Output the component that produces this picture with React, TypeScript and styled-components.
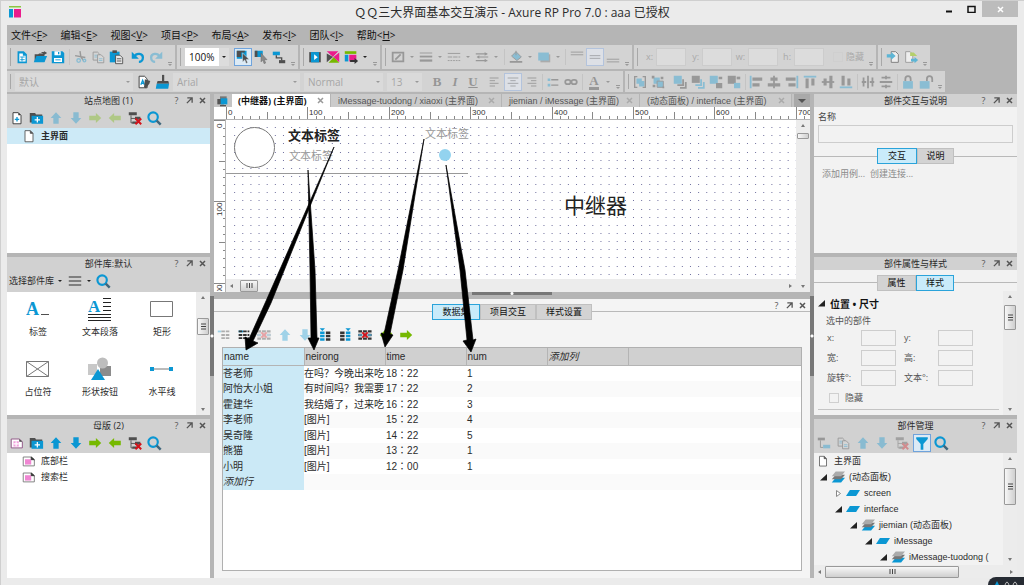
import React from "react";
import styled, { createGlobalStyle, css } from "styled-components";

const BLUE = "#0b97d3";
const DARK = "#4f4f4f";
const GREEN = "#76b900";
const PINK = "#ea1c8c";
const UI = `"Open Sans", "Noto Sans CJK SC", sans-serif`;
const DATA = `"Liberation Sans", "Noto Sans CJK SC", sans-serif`;

const Global = createGlobalStyle`
  * { box-sizing: border-box; }
  body { margin: 0; background: #ebebeb; color: #2b2b2b; font: 9px/14px ${UI}; }
  button, input, select { font: inherit; color: inherit; margin: 0; padding: 0; border: 0; border-radius: 0; background: none; }
  svg { display: block; flex: none; }
`;

/* ---------- window ---------- */
const Window = styled.div`
  position: relative;
  display: flex;
  flex-direction: column;
  height: 100vh;
  padding: 0 7px 7px 6px;
  overflow: hidden;
  background: #ebebeb;
  border-left: 1px solid #cfcfcf;
  border-top: 1px solid #cfcfcf;
`;
const TitleBar = styled.header`
  display: grid;
  grid-template-columns: 1fr auto 1fr;
  height: 24px;
  flex: none;
`;
const AppLogo = styled.div`
  padding: 5px 2px;
`;
const Title = styled.h1`
  margin: 0;
  font-size: 12px;
  line-height: 24px;
  font-weight: 400;
  white-space: nowrap;
`;
const WindowButtons = styled.div`
  display: flex;
  justify-content: flex-end;
  height: 16px;
  margin-right: -1px;
`;
const WindowButton = styled.button<{ $close?: boolean }>`
  display: grid;
  place-items: center;
  width: ${(p) => (p.$close ? 36 : 22)}px;
  && {
    background: ${(p) => (p.$close ? "#bcbcbc" : "none")};
  }
`;
const Body = styled.div`
  display: flex;
  flex-direction: column;
  flex: 1;
  min-height: 0;
  background: #b5b5b5;
`;
const MenuBar = styled.nav`
  display: flex;
  gap: 13px;
  height: 20px;
  padding-left: 4px;
  flex: none;
`;
const MenuItem = styled.button`
  && {
    font-size: 10px;
    line-height: 20px;
    color: #111;
  }
  white-space: nowrap;
`;

/* ---------- toolbars ---------- */
const ToolRow = styled.div<{ $h: number }>`
  display: flex;
  gap: 2px;
  height: ${(p) => p.$h}px;
  margin-bottom: 2px;
  flex: none;
`;
const ToolGroup = styled.div`
  display: flex;
  align-items: center;
  flex: none;
  background: #d3d3d3;
  padding-left: 6px;
  position: relative;
  &::before {
    content: "";
    position: absolute;
    left: 3px;
    top: 3px;
    bottom: 3px;
    width: 1px;
    background: #a8a8a8;
  }
`;
const Slot = styled.button<{ $on?: boolean; $off?: boolean }>`
  display: grid;
  place-items: center;
  width: 18px;
  height: 18px;
  flex: none;
  > * {
    opacity: ${(p) => (p.$off ? 0.36 : 1)};
  }
  ${(p) =>
    p.$on &&
    css`
      && {
        background: ${p.$off ? "#dde0e6" : "#dceaf5"};
      }
      box-shadow: inset 0 0 0 1px ${p.$off ? "#b3c3dc" : "#6fa3dc"};
    `}
`;
const Space = styled.span<{ $w: number; $line?: boolean }>`
  width: ${(p) => p.$w}px;
  height: 16px;
  flex: none;
  background: ${(p) => (p.$line ? "linear-gradient(#c4c4c4,#c4c4c4) center / 1px 100% no-repeat" : "none")};
`;
const Caret = styled.span<{ $off?: boolean }>`
  width: 10px;
  display: grid;
  place-items: center;
  flex: none;
  &::before {
    content: "";
    border: 2px solid transparent;
    border-top-color: ${(p) => (p.$off ? "#999" : "#222")};
    border-bottom: 0;
  }
`;
const Overflow = styled.span`
  width: 10px;
  height: 100%;
  display: flex;
  flex-direction: column;
  justify-content: flex-end;
  align-items: center;
  gap: 1px;
  padding-bottom: 3px;
  flex: none;
  &::before {
    content: "";
    width: 4px;
    height: 1px;
    background: #999;
  }
  &::after {
    content: "";
    border: 2px solid transparent;
    border-top-color: #999;
    border-bottom: 0;
  }
`;
const Combo = styled.label<{ $w: number; $live?: boolean }>`
  display: flex;
  align-items: center;
  width: ${(p) => p.$w}px;
  height: 18px;
  flex: none;
  margin: 0 2px;
  background: ${(p) => (p.$live ? "#fff" : "#dadada")};
  color: ${(p) => (p.$live ? "#111" : "#a6a6a6")};
  select {
    appearance: none;
    flex: 1;
    min-width: 0;
    padding-left: 4px;
    font-size: 10px;
    line-height: 18px;
    opacity: 1;
  }
  span {
    height: 100%;
    background: ${(p) => (p.$live ? "#dcdcdc" : "none")};
  }
`;
const MiniField = styled.label<{ $w: number }>`
  display: flex;
  align-items: center;
  justify-content: flex-end;
  gap: 3px;
  width: ${(p) => p.$w}px;
  flex: none;
  color: #a9a9a9;
  input[type="text"] {
    width: 30px;
    height: 18px;
    background: #dcdcdc;
    border: 1px solid #cccccc;
  }
`;
const Tick = styled.input`
  appearance: none;
  width: 10px;
  height: 10px;
  && {
    border: 1px solid #cfcfcf;
  }
`;

/* ---------- panes ---------- */
const Workspace = styled.main`
  display: grid;
  grid-template-columns: 203px 4px minmax(0, 1fr) 4px 203px;
  flex: 1;
  min-height: 0;
`;
const SideColumn = styled.div`
  display: grid;
  grid-template-rows: repeat(3, minmax(0, 1fr));
  gap: 4px;
  min-height: 0;
`;
const Splitter = styled.div<{ $row?: boolean }>`
  display: grid;
  place-items: center;
  &::before {
    content: "";
    width: ${(p) => (p.$row ? "80px" : "4px")};
    height: ${(p) => (p.$row ? "3px" : "80px")};
    background: radial-gradient(circle, #fff 1px, #777 2px);
  }
`;
const Panel = styled.section<{ $white?: boolean }>`
  display: flex;
  flex-direction: column;
  min-height: 0;
  overflow: hidden;
  background: ${(p) => (p.$white ? "#fff" : "#f2f2f2")};
`;
const PanelHead = styled.div`
  display: grid;
  grid-template-columns: 1fr auto 1fr;
  height: 13px;
  flex: none;
  background: #d1d1d1;
  h2 {
    margin: 0;
    font-size: 9px;
    line-height: 13px;
    font-weight: 400;
  }
`;
const HeadButtons = styled.div`
  grid-column: 3;
  display: flex;
  justify-content: flex-end;
  padding-right: 1px;
  button {
    display: grid;
    place-items: center;
    width: 13px;
    height: 13px;
    color: #555;
  }
`;
const PanelTools = styled.div<{ $n: number; $w: number; $clear?: boolean }>`
  height: 21px;
  flex: none;
  background: ${(p) => (p.$clear ? "none" : "#d1d1d1")};
  display: grid;
  grid-template-columns: repeat(${(p) => p.$n}, 1fr);
  place-items: center;
  padding-right: calc(100% - ${(p) => p.$w}px);
`;
const TreeRow = styled.div<{ $sel?: boolean; $indent: number }>`
  display: flex;
  align-items: center;
  gap: 4px;
  height: 16px;
  flex: none;
  padding-left: ${(p) => p.$indent}px;
  font-weight: ${(p) => (p.$sel ? 700 : 400)};
  background: ${(p) => (p.$sel ? "#cdeaf7" : "none")};
`;
const LibraryBar = styled.div`
  display: flex;
  align-items: center;
  height: 22px;
  padding-left: 2px;
  background: #d1d1d1;
  flex: none;
  label {
    display: flex;
    align-items: center;
  }
  select {
    appearance: none;
  }
`;
const Split = styled.div`
  display: flex;
  flex: 1;
  min-height: 0;
`;
const Library = styled.div`
  display: grid;
  grid-template-columns: repeat(3, 1fr);
  grid-auto-rows: 60px;
  flex: 1;
  padding: 5px 3px 0 0;
`;
const LibraryItem = styled.figure`
  margin: 0;
  display: flex;
  flex-direction: column;
  align-items: center;
  gap: 2px;
`;
const Bar = styled.div<{ $across?: boolean }>`
  display: flex;
  flex-direction: ${(p) => (p.$across ? "row" : "column")};
  align-items: center;
  justify-content: space-between;
  ${(p) => (p.$across ? "height: 13px; padding: 0 4px;" : "width: 14px; padding: 4px 0;")}
  flex: none;
  background: #ececec;
`;
const Thumb = styled.div<{ $across?: boolean; $size: number; $before: number }>`
  display: grid;
  place-items: center;
  flex: none;
  ${(p) =>
    p.$across
      ? `width:${p.$size}px;height:12px;margin-left:${p.$before}px;`
      : `height:${p.$size}px;width:12px;margin-top:${p.$before}px;`}
  border: 1px solid #999;
  border-radius: 1px;
  background: linear-gradient(${(p) => (p.$across ? "180deg" : "90deg")}, #f7f7f7, #cfcfcf);
`;
const Fill = styled.span`
  flex: 1;
`;
const Tip = styled.i<{ $d: "u" | "d" | "l" | "r" }>`
  flex: none;
  border: 3px solid transparent;
  ${(p) =>
    ({
      u: "border-bottom-color:#777;border-top:0;border-left-width:2px;border-right-width:2px;",
      d: "border-top-color:#777;border-bottom:0;border-left-width:2px;border-right-width:2px;",
      l: "border-right-color:#777;border-left:0;border-top-width:2px;border-bottom-width:2px;",
      r: "border-left-color:#777;border-right:0;border-top-width:2px;border-bottom-width:2px;",
    })[p.$d]}
`;
const MenuTip = styled.i`
  border: 4px solid transparent;
  border-top-color: #555;
  border-bottom: 0;
`;

/* ---------- segmented tabs ---------- */
const SegmentRow = styled.div<{ $top: number }>`
  display: flex;
  align-items: center;
  justify-content: center;
  margin-top: ${(p) => p.$top}px;
  flex: none;
  &::before,
  &::after {
    content: "";
    flex: 1;
    height: 1px;
    background: #b9b9b9;
  }
`;
const Segment = styled.button<{ $on?: boolean; $w: number }>`
  width: ${(p) => p.$w}px;
  height: 16px;
  && {
    line-height: 14px;
    color: #111;
    background: ${(p) => (p.$on ? "#c9ebfa" : "#d3d3d3")};
    border: 1px solid ${(p) => (p.$on ? "#2aa3da" : "#c0c0c0")};
  }
`;

/* ---------- centre ---------- */
const Center = styled.div`
  position: relative;
  display: flex;
  flex-direction: column;
  min-width: 0;
  min-height: 0;
`;
const Editor = styled.div`
  display: flex;
  flex-direction: column;
  height: 198px;
  flex: none;
  background: #fff;
`;
const TabStrip = styled.div`
  display: flex;
  height: 13px;
  flex: none;
  background: #c4c4c4;
`;
const PageIcon = styled.span`
  width: 18px;
  padding: 1px 2px;
  flex: none;
`;
const PageTab = styled.button<{ $on?: boolean; $w: number }>`
  display: flex;
  align-items: center;
  justify-content: space-between;
  width: ${(p) => p.$w}px;
  flex: none;
  white-space: nowrap;
  && {
    padding: 0 6px 0 ${(p) => (p.$on ? 6 : 7)}px;
    font-family: ${(p) => (p.$on ? UI : DATA)};
    font-weight: ${(p) => (p.$on ? 700 : 400)};
    color: ${(p) => (p.$on ? "#111" : "#555")};
    background: ${(p) => (p.$on ? "#fff" : "#cbcbcb")};
    border-right: 1px solid #b5b5b5;
  }
`;
const TabMenu = styled.button`
  display: grid;
  place-items: center;
  width: 16px;
  margin-left: auto;
  && {
    background: #a9a9a9;
  }
`;
const RulerTop = styled.div`
  height: 13px;
  flex: none;
  overflow: hidden;
  padding-left: 12px;
  border-bottom: 1px solid #b4b4b4;
`;
const RulerSide = styled.div`
  width: 12px;
  flex: none;
  overflow: hidden;
  border-right: 1px solid #b4b4b4;
`;
const CanvasColumn = styled.div`
  display: flex;
  flex-direction: column;
  flex: 1;
  min-width: 0;
`;
const Canvas = styled.div`
  position: relative;
  flex: 1;
  overflow: hidden;
`;
const Shape = styled.span<{ $x: number; $y: number; $size: number; $tone: string; $bold?: boolean }>`
  position: absolute;
  left: ${(p) => p.$x}px;
  top: ${(p) => p.$y}px;
  font-size: ${(p) => p.$size}px;
  line-height: ${(p) => p.$size + 4}px;
  color: ${(p) => p.$tone};
  font-weight: ${(p) => (p.$bold ? 700 : 400)};
  white-space: nowrap;
`;
const Repeater = styled.section`
  display: flex;
  flex-direction: column;
  flex: 1;
  min-height: 0;
  margin-top: 4px;
  background: #f4f4f4;
`;
const RepeaterHead = styled.div`
  display: grid;
  grid-template-columns: 1fr;
  height: 25px;
  flex: none;
  > * {
    grid-area: 1 / 1;
  }
`;
const HeadCorner = styled.div`
  display: flex;
  height: 13px;
  justify-content: flex-end;
`;
const TableBox = styled.div`
  flex: 1;
  min-height: 0;
  margin: 2px 8px 7px;
  background: #fff;
  border: 1px solid #b0b0b0;
`;
const DataTable = styled.table`
  width: 100%;
  table-layout: fixed;
  border-collapse: collapse;
  font: 10px/15px ${DATA};
  th {
    height: 17px;
    padding: 0 2px 0 1px;
    text-align: left;
    font-weight: 400;
    background: #d0d0d0;
    border-right: 1px solid #b4b4b4;
    border-bottom: 1px solid #b4b4b4;
  }
  th:last-child {
    border-right: 0;
  }
  td {
    height: 15px;
    padding: 0;
    white-space: nowrap;
  }
  tr:nth-child(even) td {
    height: 16px;
    background: #fafafa;
  }
  thead th:first-child,
  tbody tr td:first-child {
    background: #cbe9f6;
  }
  td:nth-child(3) {
    padding-left: 1px;
    font-family: "Liberation Sans", "Noto Sans CJK TC", sans-serif;
  }
  td:nth-child(4) {
    padding-left: 1px;
  }
`;
const Pointers = styled.svg`
  position: absolute;
  left: 0;
  top: 0;
  pointer-events: none;
`;

/* ---------- inspector ---------- */
const NameField = styled.label`
  display: block;
  padding: 3px 4px 0;
  color: #444;
  input {
    display: block;
    width: 100%;
    height: 18px;
    margin-top: 1px;
    border: 1px solid #cdcdcd;
  }
`;
const LinkRow = styled.div`
  display: flex;
  gap: 5px;
  padding: 3px 8px;
  a {
    color: #8a8a8a;
    text-decoration: none;
  }
`;
const Form = styled.div`
  flex: 1;
  padding: 4px 4px 0;
  color: #555;
  h3 {
    display: flex;
    align-items: center;
    gap: 5px;
    margin: 0;
    font-size: 10px;
    line-height: 18px;
    color: #111;
  }
  p {
    margin: 0 0 1px 8px;
    line-height: 16px;
  }
`;
const FieldGrid = styled.div`
  display: grid;
  grid-template-columns: 69px 69px;
  column-gap: 8px;
  row-gap: 4px;
  padding-left: 9px;
  label {
    display: flex;
    justify-content: space-between;
    align-items: center;
  }
  input {
    width: 35px;
    height: 16px;
    border: 1px solid #cdcdcd;
  }
`;
const HideRow = styled.label`
  display: flex;
  align-items: center;
  gap: 6px;
  padding: 6px 11px 5px;
  border-bottom: 1px solid #c4c4c4;
  line-height: 12px;
`;
const Outline = styled.div`
  display: flex;
  flex-direction: column;
  flex: 1;
  min-width: 0;
  overflow: hidden;
  font-family: ${DATA};
`;
const OutlineRow = styled.div<{ $level: number }>`
  display: flex;
  align-items: center;
  gap: 4px;
  flex: 1;
  white-space: nowrap;
  padding-left: ${(p) => 2 + Math.max(0, p.$level * 15 - 11)}px;
`;
const Toast = styled.div`
  position: absolute;
  right: 0;
  bottom: 0;
  width: 36px;
  height: 8px;
  background: #262b33;
  border-radius: 14px 0 0 0;
`;

/* ---------- icons ---------- */
type Art = React.ReactNode;
const Ico = ({ children, s = 18 }: { children: Art; s?: number }) => (
  <svg width={s} height={s} viewBox="0 0 18 18" fill="none" aria-hidden="true">
    {children}
  </svg>
);
const page = "M4.5 3h6l3 3v9.500h-9z";
const lines = (x1: number, x2: number, ys: number[], c = DARK, w = 1) =>
  ys.map((y) => <path key={y} d={`M${x1} ${y}H${x2}`} stroke={c} strokeWidth={w} />);

const art: Record<string, Art> = {
  newDoc: (<><path d="M4 2.500h7l3.500 3.500v10h-10.500z" fill={BLUE} /><path d="M6 5h4v2.500h3v6.500h-7z" fill="#fff" /><path d="M7 9h5M7 12h5M9 9v5" stroke={BLUE} /></>),
  open: (<><path d="M3 6h4l1-1h6v9H3z" fill={DARK} /><path d="M5 8h12l-3 7H2z" fill={BLUE} /><path d="M10 3.500h4l-1-1.500 4 2.500-3 2z" fill={DARK} /></>),
  save: (<><path d="M2 2.500h12l2 2v11.500H2z" fill={BLUE} /><path d="M5 2.500h7v4.500H5zM4.500 10h9v4.500h-9z" fill="#fff" /><path d="M9 3.500h1.500v2.500H9z" fill={BLUE} /><path d="M6 12.200h6" stroke={BLUE} /></>),
  cut: (<><path d="M9 2.500 10 9l3 4M3.500 7.500 15 9.500" stroke="#333" strokeWidth="1.600" /><circle cx="7.500" cy="13" r="2" stroke="#0b97d3" strokeWidth="1.500" /><circle cx="14" cy="13" r="1.500" stroke="#0b97d3" strokeWidth="1.500" /></>),
  copy: (<><path d="M3.500 3.500h5l2 2v7h-7z" stroke="#333" /><path d="M8.500 6.500h4l3 3v6h-7z" fill="#ddd" stroke="#333" /><path d="M10 11h4M10 13h4M5 7h3M5 9h3" stroke={BLUE} /></>),
  paste: (<><path d="M2 3h11v12H2z" fill={BLUE} /><path d="M5 1.500h5v3H5z" fill={DARK} /><path d="M8.500 7h5l3 3v6.500h-8z" fill="#e8e8e8" stroke={DARK} /><path d="M10 11h5M10 13.500h5" stroke={DARK} /></>),
  undo: (<><path d="M5 8.500C7 4 14.500 4.500 14.500 9.500c0 3-2 5-4.500 5" stroke={BLUE} strokeWidth="2.600" /><path d="M2 3v8h8z" fill={BLUE} /></>),
  redo: (<><path d="M13 8.500C11 4 3.500 4.500 3.500 9.500c0 3 2 5 4.500 5" stroke={BLUE} strokeWidth="2.600" /><path d="M16 3v8H8z" fill={BLUE} /></>),
  pick: (<><path d="M2 2h11v9H2z" fill={BLUE} /><path d="M2 2h5v7H2zM7 2h4v2H7z" fill={DARK} /><path d="M8.500 4.500v10l2.500-2.200 1.500 4 1.800-.8-1.600-3.700h3.300z" fill={DARK} stroke="#dceaf5" strokeWidth=".6" /></>),
  pick2: (<><path d="M2 2h9v7H2z" fill={BLUE} /><path d="M2 2h3v7H2z" fill={DARK} /><path d="M9 4.500v10l2-2 1.500 4 1.800-.8-1.500-3.700h3z" fill="#8a8a8a" stroke="#666" strokeWidth=".5" /></>),
  connector: (<><path d="M2 3h8v4H2z" fill={BLUE} /><path d="M6 7v3h6v3" stroke={DARK} strokeWidth="1.500" /><path d="M9 12.500h7v3.500H9z" fill={DARK} /></>),
  play: (<><path d="M2.500 3.500h13V15h-13z" fill={DARK} /><path d="M4.500 3.500h9V15h-9z" fill={BLUE} /><path d="m8 6 4 3.200-4 3.300z" fill="#fff" /></>),
  share: (<><path d="M2 2.500h13L9 9z" fill={PINK} /><path d="M9 9l6-6v5z" fill="#d3d3d3" /><path d="M2 5 9 9l-7 6z" fill={DARK} /><path d="M4 15.500 10 9l6 6.500z" fill={GREEN} /><path d="M16 4v11L9.500 9z" fill={PINK} /></>),
  publish: (<><path d="M2 2.500h13v3H2z" fill={GREEN} /><path d="M2 6.500h4V14H2z" fill={BLUE} /><path d="M7 6.500h8V14H7z" fill={PINK} /><path d="M8 12.500h5V10l4 3.500-4 3.500v-2.500H8z" fill="#333" /></>),
  fillBox: (<><path d="M3 4h12v10H3z" stroke="#333" strokeWidth="2" /><path d="m6 12 6-6" stroke="#333" strokeWidth="2" /></>),
  weight: (<>{lines(2, 16, [4.500], "#333")}{lines(2, 16, [8.500], "#333", 2)}{lines(2, 16, [13], "#333", 2.5)}</>),
  dashes: (<>{lines(2, 16, [5], "#333")}<path d="M2 9h14" stroke="#333" strokeDasharray="5 1" /><path d="M2 13h14" stroke="#333" strokeDasharray="2 1" /></>),
  ends: (<><path d="M2 5.500h13M4 9h12M2 13h13" stroke="#333" strokeWidth="1.300" /><path d="m12 3.500 3 2-3 2zM6 7 3 9l3 2zM12 11l3 2-3 2z" fill="#333" /></>),
  bucket: (<><path d="m9 3 6 6-5 4-6-5z" fill={BLUE} stroke="#333" /><path d="M2 14.500h14" stroke="#333" strokeWidth="2" /><path d="M9 2v5" stroke="#333" /></>),
  shadow: (<><path d="M5 6h11v9H5z" fill="#666" /><path d="M2.500 4h12v9h-12z" fill={BLUE} /></>),
  vTop: lines(2, 16, [3.5, 6.5], "#333"),
  vMid: lines(3, 15, [7.5, 10.5], "#333"),
  vBot: lines(2, 16, [11.500, 14.500], "#333"),
  styleEdit: (<><path d="M3.500 2.500h6l3 3v10h-9z" fill="#fff" stroke="#333" /><path d="m5.500 12 2-5 2 5M6 10.500h3" stroke={BLUE} strokeWidth="1.500" /><path d="m10 6 6 2-1 3-4 5-2-1z" fill={DARK} /></>),
  brush: (<><path d="M9 1h2.500v7H9z" fill={DARK} /><path d="M4 8h12l1 3H3z" fill={DARK} /><path d="M3 11h14l-1 5.500H2z" fill={BLUE} /></>),
  alignL: (<>{lines(3, 13, [4.500, 10.500], "#333")}{lines(3, 9, [7.500, 13.500], "#333")}</>),
  alignC: (<>{lines(3, 15, [4.500, 10.500], "#333")}{lines(6, 12, [7.500, 13.500], "#333")}</>),
  alignR: (<>{lines(5, 15, [4.500, 10.500], "#333")}{lines(9, 15, [7.500, 13.500], "#333")}</>),
  bullets: (<><path d="M3 5h3v3H3zM3 11h3v3H3z" fill={BLUE} /><path d="M7 6.500h8M7 12.500h8" stroke="#333" strokeWidth="1.500" /></>),
  link: (<><rect x="2.500" y="6.500" width="6" height="5" rx="2.500" stroke="#333" strokeWidth="2" /><rect x="9.500" y="6.500" width="6" height="5" rx="2.500" stroke="#333" strokeWidth="2" /></>),
  group: (<><path d="M5 5h6v6H5zM8 8h6v6H8z" fill={BLUE} /><path d="M3 6V3h3M12 3h3v3M15 12v3h-3M6 15H3v-3M3 6v6M15 6v6" stroke="#333" strokeWidth="1.500" /></>),
  ungroup: (<><path d="M4 4h7v7H4z" fill={BLUE} /><path d="M8 8h7v7H8z" fill={BLUE} stroke="#333" /><path d="M2 2h3v3H2zM12 3h3v3h-3zM3 12h3v3H3zM14 14h2v2h-2z" fill="#333" /></>),
  pages: (<><path d="M6 2h10v8H6z" fill="#777" /><path d="M2 6h10v8H2z" fill="#555" /><path d="M7 5h10v9H7z" fill={BLUE} /><path d="M6 16h9" stroke="#555" strokeWidth="2" /></>),
  front: (<><path d="M2 2h9v9H2z" fill={BLUE} /><path d="M12.500 6v6.500H6M15.500 9v6.500H9" stroke="#333" strokeWidth="2" /></>),
  back: (<><path d="M2 2h9v8H2z" fill="#333" /><path d="M12.500 6v6.500H6M15.500 9v6.500H9" stroke={BLUE} strokeWidth="2" /></>),
  forward: (<><path d="M2 2h9v9H2z" fill={BLUE} /><path d="M9 10h7v6H9zM12 3h4v3h-4z" fill="#333" /></>),
  backward: (<><path d="M2 2h9v9H2z" fill="#333" /><path d="M9 10h7v6H9z" fill={BLUE} /><path d="M12 3h4v3h-4z" fill="#333" /></>),
  aL: (<><path d="M3 2v14" stroke={BLUE} strokeWidth="2" /><path d="M5 4h11v3.500H5zM5 10.500h8V14H5z" fill="#333" /></>),
  aC: (<><path d="M9 2v14" stroke="#333" strokeWidth="2" /><path d="M5 4h8v3.500H5zM2 10.500h14V14H2z" fill="#333" /></>),
  aR: (<><path d="M15 2v14" stroke={BLUE} strokeWidth="2" /><path d="M2 4h11v3.500H2zM5 10.500h8V14H5z" fill="#333" /></>),
  aT: (<><path d="M2 3h14" stroke={BLUE} strokeWidth="2" /><path d="M4 5h3.500v11H4zM10.500 5H14v8h-3.500z" fill="#333" /></>),
  aM: (<><path d="M2 9h14" stroke="#333" strokeWidth="2" /><path d="M4 5h3.500v8H4zM10.500 2H14v14h-3.500z" fill="#333" /></>),
  aB: (<><path d="M2 15h14" stroke={BLUE} strokeWidth="2" /><path d="M4 2h3.500v11H4zM10.500 5H14v8h-3.500z" fill="#333" /></>),
  dH: (<><path d="M4 4v10M9 2v14M14 4v10M2 9h5M11 9h5" stroke="#333" strokeWidth="2" /></>),
  dV: (<><path d="M4 4h10M2 9h14M4 14h10M9 2v4M9 12v4" stroke="#333" strokeWidth="2" /></>),
  lock: (<><path d="M3.500 8h11v8.500h-11z" fill={BLUE} /><path d="M6 8V5.500a3 3 0 0 1 6 0V8" stroke="#333" strokeWidth="2" /></>),
  unlock: (<><path d="M2 8h11v8.500H2z" fill={BLUE} /><path d="M10 8V5.500a3 3 0 0 1 6 0V9" stroke="#333" strokeWidth="2" /></>),
  checkIn: (<><path d="M7 3h5l3 3v9H7z" stroke="#777" fill="#eee" /><path d="M2 6h5V3.500L12 8l-5 4V9.500H2z" fill="#5db5d5" /></>),
  checkOut: (<><path d="M3 3h5l3 3v9H3z" stroke="#999" fill="#eee" /><path d="M8 4h4l4 4H8z" fill="#b4cf6a" /><path d="M9 11h4V9l4 3.500-4 3.500v-2H9z" fill="#5db5d5" /></>),
  pageAdd: (<><path d={page} fill="#fff" stroke="#333" /><path d="M10.500 3v3h3z" fill="#333" /><path d="M9 8v5M6.500 10.500h5" stroke={BLUE} strokeWidth="1.500" /></>),
  page: (<><path d={page} fill="#fff" stroke="#555" /><path d="M10.500 3v3h3" fill="#555" stroke="#555" /></>),
  folderAdd: (<><path d="M2 3.500h6l1 1.500h7V14H2z" fill={DARK} /><path d="M4 6.500h13V15.500H4z" fill={BLUE} /><path d="M10.500 8v6M7.500 11h6" stroke="#fff" strokeWidth="1.400" /></>),
  up: <path d="M9 2.500 15 9h-3v6.500H6V9H3z" fill={BLUE} />,
  down: <path d="M9 15.500 3 9h3V2.500h6V9h3z" fill={BLUE} />,
  right: <path d="M16 9 10 3.500v3H2.500v5H10v3z" fill={GREEN} />,
  left: <path d="M2 9 8 3.500v3h7.500v5H8v3z" fill={GREEN} />,
  remove: (<><path d="M2 2.500h9v3.500H2zM9 7.500h6V11H9zM6 13h6v2.500H6z" fill={DARK} /><path d="M4.500 6v8.500H7M4.500 9.500H9" stroke={DARK} /><path d="m9.500 9.500 6.500 6.500m0-6.500-6.500 6.500" stroke="#d3131b" strokeWidth="2.200" /></>),
  search: (<><circle cx="8" cy="8" r="5.300" stroke={BLUE} strokeWidth="2.400" /><path d="m12 12 4.500 4.500" stroke="#40677c" strokeWidth="2.800" /></>),
  masterAdd: (<><path d="M2.500 4.500h9l3.500 3v7H2.500z" fill="#fff" stroke="#8a4c7e" /><path d="M5 7h6v6H5z" fill="#f3a0dc" /><path d="M8 7v6M5 10h6" stroke="#fff" strokeWidth="1.300" /><path d="M11.500 4.500v3H15z" fill="#444" /></>),
  master: (<><path d="M2.500 4.500h9l3.500 3v7H2.500z" fill="#fff" stroke="#777" /><path d="M4.500 7h7v6h-7z" fill="#ef86d2" /><path d="M11.500 4.500v3H15z" fill="#333" stroke="#333" /></>),
  burger: lines(2, 16, [4.500, 9, 13.500], "#555", 1.5),
  tableRowAdd: (<><path d="M2 4h4v2H2z" fill={BLUE} /><path d="M6 5h4M11 5h4M6 9h4M11 9h4M6 12.500h4M11 12.500h4" stroke="#333" strokeWidth="2" /></>),
  tableRow: (<><path d="M3 4h5v2H3z" fill={BLUE} /><path d="M3 5h12M3 9h12M3 12.500h12" stroke="#333" strokeWidth="2" strokeDasharray="4 1" /></>),
  tableDel: (<><path d="M1.500 5h15M1.500 9h15M1.500 13h15" stroke="#333" strokeWidth="2.600" strokeDasharray="4.300 1" /><path d="M1.500 9h15" stroke="#4f8fb0" strokeWidth="2" strokeDasharray="4.300 1" /><path d="m6 6 6 6m0-6-6 6" stroke="#d3131b" strokeWidth="2.200" /></>),
  colL: (<><path d="M3 1.500h6l-3 3z" fill={BLUE} /><path d="M6 5v11" stroke={BLUE} strokeWidth="5" strokeDasharray="2.800 1" /><path d="M12.500 5v11" stroke="#333" strokeWidth="5" strokeDasharray="2.800 1" /></>),
  colR: (<><path d="M9.500 1.500h6l-3 3z" fill={BLUE} /><path d="M6 5v11" stroke="#333" strokeWidth="5" strokeDasharray="2.800 1" /><path d="M12.500 5v11" stroke={BLUE} strokeWidth="5" strokeDasharray="2.800 1" /></>),
  treeAdd: (<><path d="M2 3h8v3H2z" fill="#333" /><path d="M5 6v8h3" stroke="#333" /><path d="M8 11h8v4H8z" fill={BLUE} /></>),
  funnel: <path d="M2.500 2.500h13v2L10.500 10v6.500h-3V10l-5-5.500z" fill={BLUE} />,
  stack: (<><path d="M6 10h12l-5 6H1z" fill={BLUE} /><path d="M6 6h12l-5 6H1z" fill="#777" /><path d="M6 2h12l-5 6H1z" fill="#ababab" /></>),
  state: <path d="M5 5h13l-5 8H0z" fill={BLUE} />,
};
const Letter = styled.b<{ $kind: "b" | "i" | "u" | "a" }>`
  font: ${(p) => (p.$kind === "i" ? "italic" : "normal")} 700 13px/13px "Liberation Serif", serif;
  text-decoration: ${(p) => (p.$kind === "u" ? "underline" : "none")};
  border-bottom: ${(p) => (p.$kind === "a" ? "3px solid #333" : "0")};
`;

const Tool = ({ n, label, on, off }: { n: string; label?: string; on?: boolean; off?: boolean }) => (
  <Slot $on={on} $off={off} disabled={off} aria-label={label ?? n}>
    <Ico s={16}>{art[n]}</Ico>
  </Slot>
);
const Tools = ({ list, off }: { list: string[]; off?: boolean }) => (
  <>{list.map((n) => <Tool key={n} n={n} off={off} />)}</>
);
const CloseMark = ({ c = "#555", s = 7 }: { c?: string; s?: number }) => (
  <svg width={s} height={s} viewBox="0 0 7 7" aria-hidden="true">
    <path d="m1 1 5 5m0-5-5 5" stroke={c} strokeWidth="1.500" />
  </svg>
);
const Corner = () => (
  <HeadButtons>
    <button aria-label="帮助">?</button>
    <button aria-label="浮动">
      <svg width="7" height="7" viewBox="0 0 8 8" aria-hidden="true">
        <path d="M1.500 1h5.500v5.500M6.500 1.500 1 7" stroke="#555" strokeWidth="1.500" fill="none" />
      </svg>
    </button>
    <button aria-label="关闭"><CloseMark /></button>
  </HeadButtons>
);
const Head = ({ children }: { children: string }) => (
  <PanelHead>
    <span />
    <h2>{children}</h2>
    <Corner />
  </PanelHead>
);
const Scroll = ({ before, size, across }: { before: number; size: number; across?: boolean }) => (
  <Bar $across={across}>
    <Tip $d={across ? "l" : "u"} />
    <Thumb $across={across} $size={size} $before={before}>
      {size > 10 && (
        <svg width="7" height="7" viewBox="0 0 7 7" aria-hidden="true">
          <path d={across ? "M1 1v5M3.500 1v5M6 1v5" : "M1 1h5M1 3.500h5M1 6h5"} stroke="#444" />
        </svg>
      )}
    </Thumb>
    <Fill />
    <Tip $d={across ? "r" : "d"} />
  </Bar>
);

/* ---------- library drawings ---------- */
const libraryItems: { name: string; art: Art }[] = [
  { name: "标签", art: (<><text x="0" y="18" fontSize="18" fontWeight="700" fontFamily="Liberation Serif, serif" fill={BLUE}>A</text><path d="M15 17.500h8" stroke={DARK} /></>) },
  { name: "文本段落", art: (<><text x="0" y="15" fontSize="17" fontWeight="700" fontFamily="Liberation Serif, serif" fill={BLUE}>A</text>{lines(15, 23, [1.500, 5.500, 9.500, 13.500], "#222")}{lines(0, 23, [17.500, 20.500, 23.500], "#222")}</>) },
  { name: "矩形", art: <path d="M.5 4.500h22v15H.5z" fill="#fff" stroke="#777" /> },
  { name: "占位符", art: <path d="M.5 4.500h22v15H.5zL22.500 19.500M22.500 4.500.5 19.500" fill="#fff" stroke="#777" /> },
  { name: "形状按钮", art: (<><path d="M0 7h9v11H0z" fill="#c8c8c8" /><path d="M12 9h11v10H12z" fill="#8c8c8c" /><circle cx="14.500" cy="6" r="5.500" fill="#bdbdbd" /><path d="m10 12 7 11H3z" fill={BLUE} /></>) },
  { name: "水平线", art: (<><path d="M2 12h20" stroke="#777" /><path d="M0 10h4v4H0zM19 10h4v4h-4z" fill={BLUE} /></>) },
];

/* Rulers and grid share one scale: ten units per step. */
const STEP = 8.14;
const tickLength = (i: number) => (i % 10 === 0 ? 12 : i % 5 === 0 ? 7 : 3);
const HorizontalTicks = () => (
  <svg width="100%" height="12" aria-hidden="true">
    {Array.from({ length: 240 }, (_, i) => (
      <rect key={i} x={Math.round(i * STEP)} y={12 - tickLength(i)} width="1" height={tickLength(i)} fill="#888" />
    ))}
    {Array.from({ length: 8 }, (_, i) => (
      <text key={i} x={Math.round(i * 10 * STEP) + 2} y="8" fontSize="8" fontFamily="Liberation Sans, sans-serif" fill="#333">
        {i * 100}
      </text>
    ))}
  </svg>
);
const VerticalTicks = () => (
  <svg width="12" height="171" aria-hidden="true">
    {Array.from({ length: 21 }, (_, i) => (
      <rect key={i} x={12 - tickLength(i)} y={Math.round(i * STEP)} height="1" width={tickLength(i)} fill="#888" />
    ))}
    {[0, 100, 200].map((v, i) => (
      <text key={v} transform={`translate(8 ${Math.round(i * 10 * STEP) + (i ? 15 : 8)}) rotate(-90)`} fontSize="8" fontFamily="Liberation Sans, sans-serif" fill="#333">
        {v}
      </text>
    ))}
  </svg>
);
const GridDots = () => (
  <svg width="100%" height="100%" aria-hidden="true">
    {Array.from({ length: 20 }, (_, r) => (
      <line
        key={r}
        x1={STEP}
        x2="100%"
        y1={Math.round((r + 1) * STEP) - 0.5}
        y2={Math.round((r + 1) * STEP) - 0.5}
        stroke="#70709f"
        strokeDasharray={`1 ${STEP - 1}`}
      />
    ))}
    <path d="M0 53.500h242" stroke="#999" />
    <circle cx="28.500" cy="27.500" r="20" fill="#fff" stroke="#777" />
    <circle cx="219" cy="35" r="6" fill="#93d3ef" />
  </svg>
);

const rows = [
  ["苍老师", "在吗？今晚出来吃", "18：22", "1"],
  ["阿怡大小姐", "有时间吗？我需要", "17：22", "2"],
  ["霍建华", "我结婚了，过来吃", "16：22", "3"],
  ["李老师", "[图片]", "15：22", "4"],
  ["吴奇隆", "[图片]", "14：22", "5"],
  ["熊猫", "[图片]", "13：22", "1"],
  ["小明", "[图片]", "12：00", "1"],
];
const menus = [["文件", "F"], ["编辑", "E"], ["视图", "V"], ["项目", "P"], ["布局", "A"], ["发布", "I"], ["团队", "I"], ["帮助", "H"]];

const Expander = ({ open = true }: { open?: boolean }) => (
  <svg width="7" height="7" viewBox="0 0 7 7" aria-hidden="true">
    {open ? <path d="M7 0v6.500H0z" fill="#222" /> : <path d="M1.500.5v6l4-3z" fill="#fff" stroke="#888" />}
  </svg>
);
const outline = [
  { level: 1, icon: "stack", text: "(动态面板)", open: true },
  { level: 2, icon: "state", text: "screen", open: false },
  { level: 2, icon: "state", text: "interface", open: true },
  { level: 3, icon: "stack", text: "jiemian (动态面板)", open: true },
  { level: 4, icon: "state", text: "iMessage", open: true },
  { level: 5, icon: "stack", text: "iMessage-tuodong (", open: true },
];

const PairOff = ({ n }: { n: string }) => (<><Tool n={n} off /><Caret $off /></>);
const Picker = ({ w, value, label, live }: { w: number; value: string; label: string; live?: boolean }) => (
  <Combo $w={w} $live={live}>
    <select aria-label={label} disabled={!live} defaultValue={value}>
      <option>{value}</option>
    </select>
    <Caret $off={!live} />
  </Combo>
);

export default function App() {
  return (
    <Window>
      <Global />
      <TitleBar>
        <AppLogo>
          <svg width="12" height="12" viewBox="0 0 12 12" aria-hidden="true">
            <path d="M0 0h12v1.500H0z" fill="#8bc63f" />
            <path d="M0 3h4v8.500H0z" fill={BLUE} />
            <path d="M5 3h7v8.500H5z" fill={PINK} />
          </svg>
        </AppLogo>
        <Title>ＱＱ三大界面基本交互演示 - Axure RP Pro 7.0 : aaa 已授权</Title>
        <WindowButtons>
          <WindowButton aria-label="最小化">
            <svg width="8" height="8"><path d="M1 6.500h6" stroke="#111" strokeWidth="2" /></svg>
          </WindowButton>
          <WindowButton aria-label="最大化">
            <svg width="9" height="8"><path d="M1 1.500h7v6H1z" stroke="#111" strokeWidth="1.500" fill="none" /></svg>
          </WindowButton>
          <WindowButton $close aria-label="关闭窗口"><CloseMark c="#fff" /></WindowButton>
        </WindowButtons>
      </TitleBar>

      <Body>
        <MenuBar>
          {menus.map(([t, k]) => (
            <MenuItem key={t}>{t}&lt;<u>{k}</u>&gt;</MenuItem>
          ))}
        </MenuBar>

        <ToolRow $h={24}>
          <ToolGroup>
            <Tools list={["newDoc", "open", "save"]} />
            <Space $w={4} $line />
            <Tools list={["cut", "copy"]} off />
            <Tool n="paste" />
            <Space $w={4} />
            <Tool n="undo" />
            <Tool n="redo" off />
            <Overflow />
          </ToolGroup>
          <ToolGroup>
            <Picker w={44} value="100%" label="缩放" live />
            <Space $w={3} />
            <Tool n="pick" on />
            <Tools list={["pick2", "connector"]} />
            <Overflow />
          </ToolGroup>
          <ToolGroup>
            <Tools list={["play", "share", "publish"]} />
            <Caret />
            <Overflow />
          </ToolGroup>
          <ToolGroup>
            <Space $w={1} />
            {["fillBox", "weight", "dashes", "ends"].map((n) => <PairOff key={n} n={n} />)}
            <Space $w={6} $line />
            {["bucket", "shadow"].map((n) => <PairOff key={n} n={n} />)}
            <Space $w={5} $line />
            <Tool n="vTop" off />
            <Tool n="vMid" off on />
            <Tool n="vBot" off />
            <Overflow />
          </ToolGroup>
          <ToolGroup>
            {["x:", "y:", "w:", "h:"].map((t) => (
              <MiniField key={t} $w={46}>
                {t}
                <input type="text" disabled />
              </MiniField>
            ))}
            <MiniField $w={40}>
              <Tick type="checkbox" disabled />
              隐藏
            </MiniField>
            <Space $w={2} />
            <Overflow />
          </ToolGroup>
          <ToolGroup>
            <Tools list={["checkIn", "checkOut"]} />
            <Overflow />
          </ToolGroup>
        </ToolRow>

        <ToolRow $h={21}>
          <ToolGroup>
            <Picker w={118} value="默认" label="样式" />
            <Tools list={["styleEdit", "brush"]} />
            <Picker w={127} value="Arial" label="字体" />
            <Picker w={79} value="Normal" label="字形" />
            <Picker w={35} value="13" label="字号" />
            <Space $w={4} />
            <Slot $off disabled aria-label="粗体"><Letter $kind="b">B</Letter></Slot>
            <Slot $off disabled aria-label="斜体"><Letter $kind="i">I</Letter></Slot>
            <Slot $off disabled aria-label="下划线"><Letter $kind="u">U</Letter></Slot>
            <Space $w={4} />
            <Tool n="alignL" off />
            <Tool n="alignC" off on />
            <Tool n="alignR" off />
            <Space $w={4} $line />
            <Tools list={["bullets", "link"]} off />
            <Space $w={5} $line />
            <Slot $off disabled aria-label="文字颜色"><Letter $kind="a">A</Letter></Slot>
            <Caret $off />
            <Overflow />
          </ToolGroup>
          <ToolGroup>
            <Tools list={["group", "ungroup"]} off />
            <Space $w={4} />
            <Tools list={["front", "back", "forward", "backward"]} off />
            <Space $w={4} $line />
            <Tools list={["aL", "aC", "aR", "aT", "aM", "aB"]} off />
            <Space $w={4} $line />
            <Tools list={["dH", "dV"]} off />
            <Space $w={4} $line />
            <Tools list={["lock", "unlock"]} off />
            <Overflow />
          </ToolGroup>
        </ToolRow>

        <Workspace>
          <SideColumn>
            <Panel $white>
              <Head>站点地图 (1)</Head>
              <PanelTools $n={8} $w={157}>
                <Tool n="pageAdd" />
                <Tool n="folderAdd" />
                <Tools list={["up", "down", "right", "left"]} off />
                <Tools list={["remove", "search"]} />
              </PanelTools>
              <TreeRow $sel $indent={14}>
                <Ico s={16}>{art.page}</Ico>
                主界面
              </TreeRow>
            </Panel>

            <Panel $white>
              <Head>部件库:默认</Head>
              <LibraryBar>
                <label>
                  <select aria-label="选择部件库"><option>选择部件库</option></select>
                  <Caret />
                </label>
                <Space $w={1} />
                <Tool n="burger" />
                <Caret $off={false} />
                <Tool n="search" />
              </LibraryBar>
              <Split>
                <Library>
                  {libraryItems.map((it) => (
                    <LibraryItem key={it.name}>
                      <svg width="24" height="26" viewBox="0 0 24 26" aria-hidden="true">{it.art}</svg>
                      <figcaption>{it.name}</figcaption>
                    </LibraryItem>
                  ))}
                </Library>
                <Scroll before={19} size={17} />
              </Split>
            </Panel>

            <Panel $white>
              <Head>母版 (2)</Head>
              <PanelTools $n={8} $w={157}>
                <Tools list={["masterAdd", "folderAdd", "up", "down", "right", "left", "remove", "search"]} />
              </PanelTools>
              {["底部栏", "搜索栏"].map((t) => (
                <TreeRow key={t} $indent={14}>
                  <Ico s={16}>{art.master}</Ico>
                  {t}
                </TreeRow>
              ))}
            </Panel>
          </SideColumn>

          <Splitter />

          <Center>
            <Editor>
              <TabStrip>
                <PageIcon><Ico s={12}>{art.pages}</Ico></PageIcon>
                <PageTab $on $w={99}>(中继器) (主界面)<CloseMark c="#999" /></PageTab>
                <PageTab $w={171}>iMessage-tuodong / xiaoxi (主界面)<CloseMark c="#aaa" /></PageTab>
                <PageTab $w={138}>jiemian / iMessage (主界面)<CloseMark c="#aaa" /></PageTab>
                <PageTab $w={152}>(动态面板) / interface (主界面)<CloseMark c="#aaa" /></PageTab>
                <TabMenu aria-label="更多页面"><MenuTip /></TabMenu>
              </TabStrip>
              <RulerTop><HorizontalTicks /></RulerTop>
              <Split>
                <RulerSide><VerticalTicks /></RulerSide>
                <CanvasColumn>
                  <Canvas>
                    <GridDots />
                    <Shape $x={62} $y={7} $size={13} $tone="#222" $bold>文本标签</Shape>
                    <Shape $x={63} $y={28} $size={11} $tone="#999">文本标签</Shape>
                    <Shape $x={199} $y={6} $size={11} $tone="#999">文本标签</Shape>
                    <Shape $x={338} $y={73} $size={21} $tone="#222">中继器</Shape>
                  </Canvas>
                  <Scroll across before={7} size={18} />
                </CanvasColumn>
                <Scroll before={6} size={6} />
              </Split>
            </Editor>
            <Splitter $row />
            <Repeater>
              <RepeaterHead>
                <SegmentRow $top={0}>
                  <Segment $on $w={48}>数据集</Segment>
                  <Segment $w={56}>项目交互</Segment>
                  <Segment $w={56}>样式设置</Segment>
                </SegmentRow>
                <HeadCorner><Corner /></HeadCorner>
              </RepeaterHead>
              <PanelTools $n={10} $w={202} $clear>
                <Tools list={["tableRowAdd"]} off />
                <Tool n="tableRow" />
                <Tools list={["tableDel", "up", "down"]} off />
                <Tools list={["colL", "colR", "tableDel"]} />
                <Tool n="left" />
                <Tool n="right" />
              </PanelTools>
              <TableBox>
                <DataTable>
                  <colgroup>
                    {[0, 1, 2, 3, 4].map((i) => <col key={i} width="81" />)}
                    <col />
                  </colgroup>
                  <thead>
                    <tr>
                      <th>name</th><th>neirong</th><th>time</th><th>num</th><th><em>添加列</em></th><th />
                    </tr>
                  </thead>
                  <tbody>
                    {rows.map((r) => (
                      <tr key={r[0]}>{r.map((c, i) => <td key={i}>{c}</td>)}<td /><td /></tr>
                    ))}
                    <tr><td><em>添加行</em></td><td /><td /><td /><td /><td /></tr>
                  </tbody>
                </DataTable>
              </TableBox>
            </Repeater>
            <Pointers width="300" height="270" viewBox="214 94 300 270" stroke="#000" strokeWidth="0.700" aria-hidden="true">
              <path d="M334 147 271 303 253 341l5 2-12 7-1-13 4 2 17-38z" />
              <path d="M308 170 315 270 317 338h2l-5 12-6-12h3l-1-68z" />
              <path d="M424 139 403 270 390 334l3 1-8 12-4-14 3 1 14-64z" />
              <path d="M446 165 465 270 473 340l3-1-5 13-8-11 4-1-7-70z" />
            </Pointers>
          </Center>

          <Splitter />

          <SideColumn>
            <Panel>
              <Head>部件交互与说明</Head>
              <NameField>
                名称
                <input type="text" />
              </NameField>
              <SegmentRow $top={5}>
                <Segment $on $w={40}>交互</Segment>
                <Segment $w={37}>说明</Segment>
              </SegmentRow>
              <LinkRow>
                <a href="#case">添加用例...</a>
                <a href="#link">创建连接...</a>
              </LinkRow>
            </Panel>

            <Panel>
              <Head>部件属性与样式</Head>
              <SegmentRow $top={5}>
                <Segment $w={39}>属性</Segment>
                <Segment $on $w={38}>样式</Segment>
              </SegmentRow>
              <Split>
                <Form>
                  <h3><Expander />位置 • 尺寸</h3>
                  <p>选中的部件</p>
                  <FieldGrid>
                    {["x:", "y:", "宽:", "高:", "旋转°:", "文本°:"].map((t) => (
                      <label key={t}>{t}<input type="text" /></label>
                    ))}
                  </FieldGrid>
                  <HideRow><Tick type="checkbox" />隐藏</HideRow>
                </Form>
                <Scroll before={7} size={25} />
              </Split>
            </Panel>

            <Panel>
              <Head>部件管理</Head>
              <PanelTools $n={7} $w={137}>
                <Tools list={["treeAdd", "copy", "up", "down", "remove"]} off />
                <Tool n="funnel" on />
                <Tool n="search" />
              </PanelTools>
              <Split>
                <Outline>
                  <OutlineRow $level={0}><Ico s={14}>{art.page}</Ico>主界面</OutlineRow>
                  {outline.map((o) => (
                    <OutlineRow key={o.text} $level={o.level}>
                      <Expander open={o.open} />
                      <Ico s={14}>{art[o.icon]}</Ico>
                      {o.text}
                    </OutlineRow>
                  ))}
                </Outline>
                <Scroll before={8} size={37} />
              </Split>
              <Scroll across before={4} size={134} />
            </Panel>
          </SideColumn>
        </Workspace>
      </Body>
      <Toast>
        <svg width="36" height="8" aria-hidden="true">
          <path d="m7 8 2-4 2 4z" fill={BLUE} />
          <path d="M17 8q2-6 4 0M25 8q2-6 4 0" stroke="#bbb" fill="none" />
        </svg>
      </Toast>
    </Window>
  );
}
